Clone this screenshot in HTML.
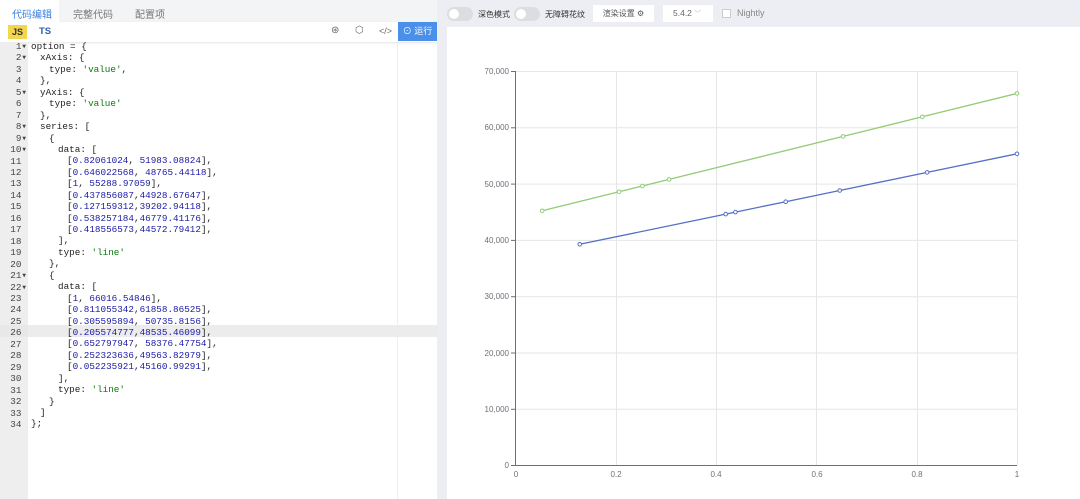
<!DOCTYPE html><html><head><meta charset="utf-8"><style>
*{margin:0;padding:0;box-sizing:border-box}
html,body{width:1080px;height:499px;overflow:hidden}
body{background:#fff;font-family:"Liberation Sans","Noto Sans CJK SC",sans-serif;position:relative}
.a{position:absolute}
.code{font-family:"Liberation Mono",monospace;font-size:9.3px;line-height:11.45px;color:#222}
.code div{height:11.45px;white-space:pre}
.l1{padding-left:9px}.l2{padding-left:18px}.l3{padding-left:27px}.l4{padding-left:36px}
.n{color:#1a1aa6}.s{color:#0a7a0a}
.ln{font-family:"Liberation Mono",monospace;font-size:9.3px;line-height:11.45px;color:#444;text-align:right;white-space:pre}
</style></head><body>
<div class="a" style="left:0;top:0;width:437px;height:22px;background:#f3f4f6"></div>
<div class="a" style="left:0;top:0;width:59px;height:22px;background:#fff"></div>
<div class="a" style="left:12px;top:6px;font-size:10px;color:#3a80e0">代码编辑</div>
<div class="a" style="left:73px;top:6px;font-size:10px;color:#777">完整代码</div>
<div class="a" style="left:135px;top:6px;font-size:10px;color:#777">配置项</div>
<div class="a" style="left:0;top:22px;width:437px;height:20px;background:#fff;box-shadow:0 1px 2px #e4e4e4"></div>
<div class="a" style="left:8px;top:25px;width:19px;height:14px;background:#f3d64e;font-size:9px;font-weight:bold;text-align:center;line-height:14px;color:#333">JS</div>
<div class="a" style="left:39px;top:26px;font-size:9.5px;font-weight:bold;color:#2a5fa8">TS</div>
<div class="a" style="left:331px;top:25px;font-size:10px;color:#666">⊛</div>
<div class="a" style="left:355px;top:25px;font-size:10px;color:#666">⬡</div>
<div class="a" style="left:379px;top:26px;font-size:9px;color:#666">&lt;/&gt;</div>
<div class="a" style="left:398px;top:22px;width:39px;height:19px;background:#4a90e8;color:#fff;font-size:9px;line-height:19px;text-align:center">⊙ 运行</div>
<div class="a" style="left:0;top:42px;width:28px;height:457px;background:#eeeeee"></div>
<div class="a" style="left:397px;top:42px;width:1px;height:457px;background:#eee"></div>
<div class="a" style="left:0;top:325px;width:437px;height:12px;background:#e8e8e8"></div>
<div class="a" style="left:28px;top:325px;width:409px;height:12px;background:#ececec"></div>
<div class="a ln" style="left:0;top:41px;width:27px">1▾
2▾
3 
4 
5▾
6 
7 
8▾
9▾
10▾
11 
12 
13 
14 
15 
16 
17 
18 
19 
20 
21▾
22▾
23 
24 
25 
26 
27 
28 
29 
30 
31 
32 
33 
34 </div>
<div class="a code" style="left:31px;top:41px"><div>option = {</div><div class="l1">xAxis: {</div><div class="l2">type: <span class="s">'value'</span>,</div><div class="l1">},</div><div class="l1">yAxis: {</div><div class="l2">type: <span class="s">'value'</span></div><div class="l1">},</div><div class="l1">series: [</div><div class="l2">{</div><div class="l3">data: [</div><div class="l4">[<span class="n">0.82061024</span>, <span class="n">51983.08824</span>],</div><div class="l4">[<span class="n">0.646022568</span>, <span class="n">48765.44118</span>],</div><div class="l4">[<span class="n">1</span>, <span class="n">55288.97059</span>],</div><div class="l4">[<span class="n">0.437856087</span>,<span class="n">44928.67647</span>],</div><div class="l4">[<span class="n">0.127159312</span>,<span class="n">39202.94118</span>],</div><div class="l4">[<span class="n">0.538257184</span>,<span class="n">46779.41176</span>],</div><div class="l4">[<span class="n">0.418556573</span>,<span class="n">44572.79412</span>],</div><div class="l3">],</div><div class="l3">type: <span class="s">'line'</span></div><div class="l2">},</div><div class="l2">{</div><div class="l3">data: [</div><div class="l4">[<span class="n">1</span>, <span class="n">66016.54846</span>],</div><div class="l4">[<span class="n">0.811055342</span>,<span class="n">61858.86525</span>],</div><div class="l4">[<span class="n">0.305595894</span>, <span class="n">50735.8156</span>],</div><div class="l4">[<span class="n">0.205574777</span>,<span class="n">48535.46099</span>],</div><div class="l4">[<span class="n">0.652797947</span>, <span class="n">58376.47754</span>],</div><div class="l4">[<span class="n">0.252323636</span>,<span class="n">49563.82979</span>],</div><div class="l4">[<span class="n">0.052235921</span>,<span class="n">45160.99291</span>],</div><div class="l3">],</div><div class="l3">type: <span class="s">'line'</span></div><div class="l2">}</div><div class="l1">]</div><div>};</div></div>
<div class="a" style="left:437px;top:0;width:643px;height:499px;background:#eceef3"></div>
<div class="a" style="left:447px;top:27px;width:633px;height:472px;background:#fff"></div>
<div class="a" style="left:447px;top:7px;width:26px;height:14px;border-radius:7px;background:#dcdde0"></div>
<div class="a" style="left:449px;top:9px;width:10px;height:10px;border-radius:5px;background:#fff"></div>
<div class="a" style="left:478px;top:9px;font-size:8px;color:#333">深色模式</div>
<div class="a" style="left:514px;top:7px;width:26px;height:14px;border-radius:7px;background:#dcdde0"></div>
<div class="a" style="left:516px;top:9px;width:10px;height:10px;border-radius:5px;background:#fff"></div>
<div class="a" style="left:545px;top:9px;font-size:8px;color:#333">无障碍花纹</div>
<div class="a" style="left:593px;top:5px;width:61px;height:17px;background:#fff;font-size:8px;color:#555;line-height:17px;text-align:center">渲染设置 ⚙</div>
<div class="a" style="left:663px;top:5px;width:50px;height:17px;background:#fff;font-size:8.5px;color:#666;line-height:17px;padding-left:10px">5.4.2 <span style="color:#bbb;font-size:7px">﹀</span></div>
<div class="a" style="left:722px;top:9px;width:9px;height:9px;border:1px solid #ccc;background:#fff"></div>
<div class="a" style="left:737px;top:8px;font-size:9px;color:#888">Nightly</div>
<svg class="a" style="left:0;top:0" width="1080" height="499">
<g stroke="#e6e6e6" stroke-width="1">
<line x1="516" y1="71.5" x2="1017" y2="71.5"/><line x1="516" y1="127.8" x2="1017" y2="127.8"/><line x1="516" y1="184.1" x2="1017" y2="184.1"/><line x1="516" y1="240.4" x2="1017" y2="240.4"/><line x1="516" y1="296.7" x2="1017" y2="296.7"/><line x1="516" y1="353" x2="1017" y2="353"/><line x1="516" y1="409.3" x2="1017" y2="409.3"/>
<line x1="616.5" y1="71" x2="616.5" y2="465"/><line x1="716.5" y1="71" x2="716.5" y2="465"/><line x1="816.5" y1="71" x2="816.5" y2="465"/><line x1="917.5" y1="71" x2="917.5" y2="465"/><line x1="1017.5" y1="71" x2="1017.5" y2="465"/>
</g>
<g stroke="#6e7079"><line x1="515.5" y1="71" x2="515.5" y2="465"/><line x1="515" y1="465.5" x2="1017" y2="465.5"/>
<line x1="511" y1="71.5" x2="515" y2="71.5"/><line x1="511" y1="127.8" x2="515" y2="127.8"/><line x1="511" y1="184.1" x2="515" y2="184.1"/><line x1="511" y1="240.4" x2="515" y2="240.4"/><line x1="511" y1="296.7" x2="515" y2="296.7"/><line x1="511" y1="353" x2="515" y2="353"/><line x1="511" y1="409.3" x2="515" y2="409.3"/><line x1="511" y1="465.5" x2="515" y2="465.5"/></g>
<g font-size="8" fill="#6e7079" text-anchor="end" font-family="Liberation Sans">
<text x="509" y="74">70,000</text><text x="509" y="130">60,000</text><text x="509" y="187">50,000</text><text x="509" y="243">40,000</text><text x="509" y="299">30,000</text><text x="509" y="356">20,000</text><text x="509" y="412">10,000</text><text x="509" y="468">0</text></g>
<g font-size="8" fill="#6e7079" text-anchor="middle" font-family="Liberation Sans">
<text x="516" y="477">0</text><text x="616" y="477">0.2</text><text x="716" y="477">0.4</text><text x="817" y="477">0.6</text><text x="917" y="477">0.8</text><text x="1017" y="477">1</text></g>
<polyline fill="none" stroke="#5470c6" stroke-width="1.3" points="579.7,244.3 725.7,214.1 735.4,212.1 785.7,201.7 839.7,190.5 927.1,172.4 1017,153.8"/>
<polyline fill="none" stroke="#91cc75" stroke-width="1.3" points="542.2,210.8 619,191.8 642.4,186 669.1,179.4 843.1,136.4 922.3,116.8 1017,93.4"/>
<g fill="#fff" stroke="#5470c6"><circle cx="579.7" cy="244.3" r="1.8"/><circle cx="725.7" cy="214.1" r="1.8"/><circle cx="735.4" cy="212.1" r="1.8"/><circle cx="785.7" cy="201.7" r="1.8"/><circle cx="839.7" cy="190.5" r="1.8"/><circle cx="927.1" cy="172.4" r="1.8"/><circle cx="1017" cy="153.8" r="1.8"/></g>
<g fill="#fff" stroke="#91cc75"><circle cx="542.2" cy="210.8" r="1.8"/><circle cx="619" cy="191.8" r="1.8"/><circle cx="642.4" cy="186" r="1.8"/><circle cx="669.1" cy="179.4" r="1.8"/><circle cx="843.1" cy="136.4" r="1.8"/><circle cx="922.3" cy="116.8" r="1.8"/><circle cx="1017" cy="93.4" r="1.8"/></g>
</svg>
</body></html>
